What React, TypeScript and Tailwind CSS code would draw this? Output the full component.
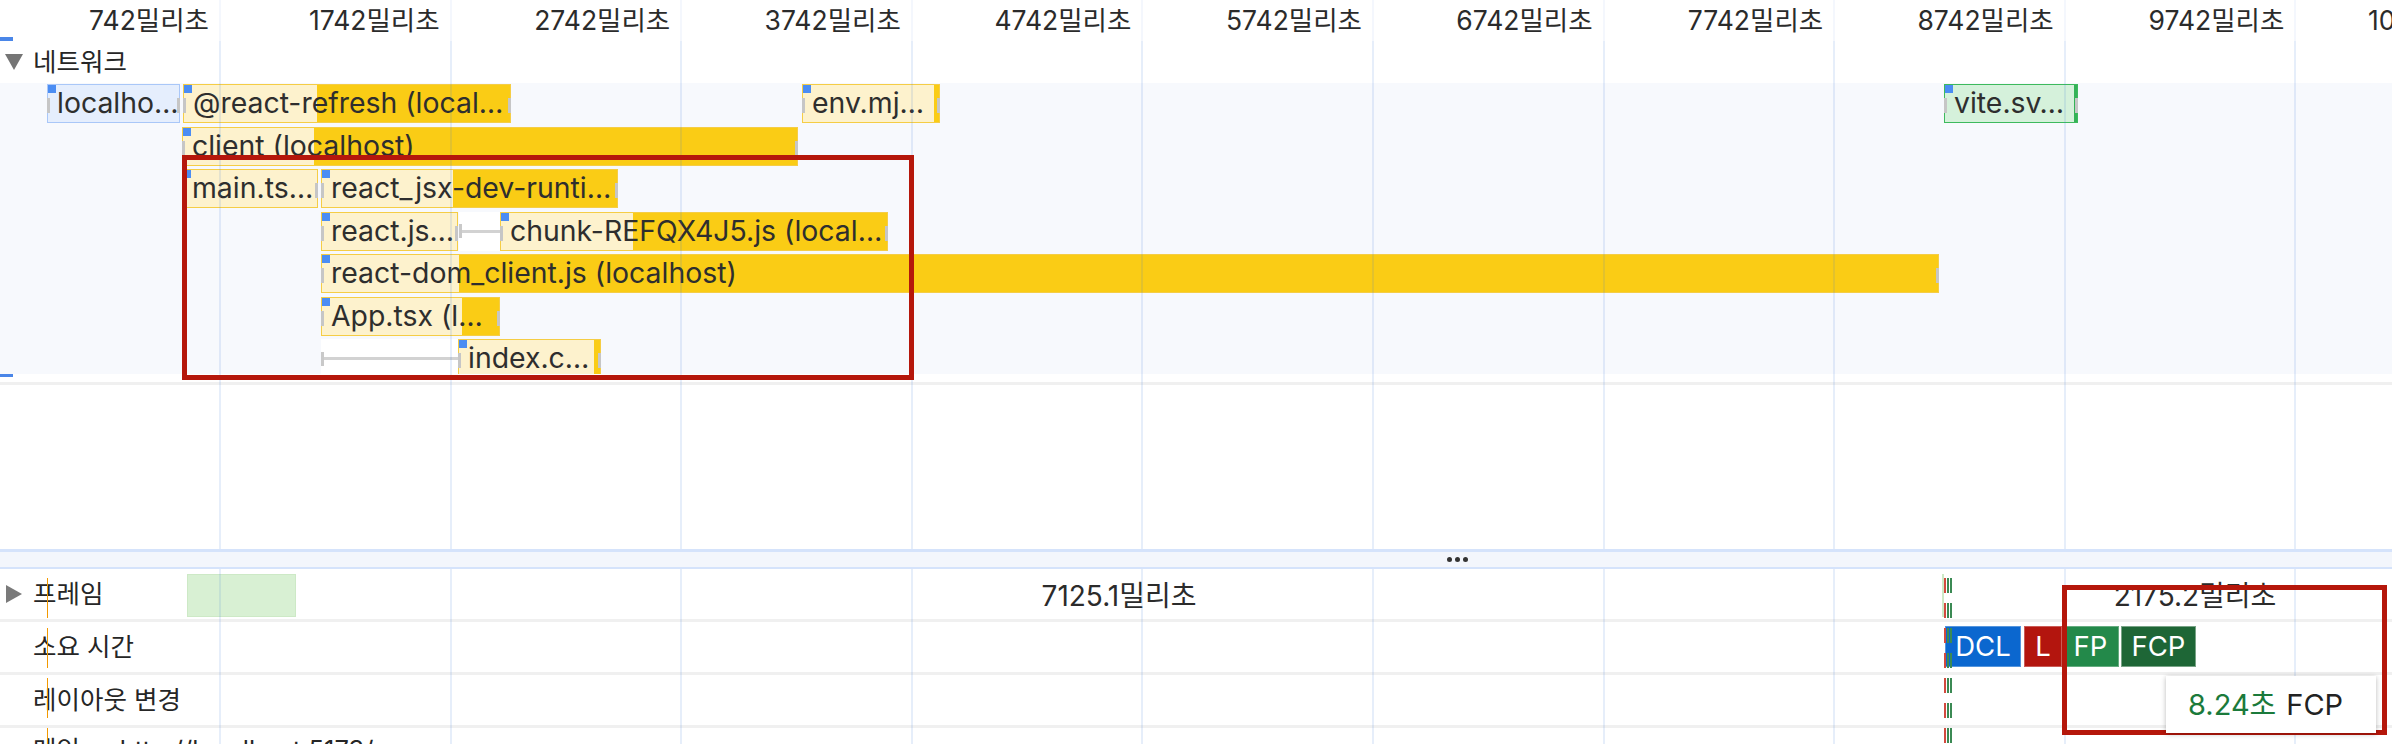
import clsx from "clsx";

type Kind = "doc" | "script" | "img";

interface NetRequest {
  label: string;
  start: number;
  split: number;
  end: number;
  kind: Kind;
  queuedFrom?: number;
}

const KIND_STYLES: Record<Kind, { box: string; light: string; solid: string }> = {
  doc: { box: "border-[#a9c7f8]", light: "bg-[#e5eefd]", solid: "bg-[#4b8af3]" },
  script: { box: "border-[#f5cd45]", light: "bg-[#fdf2cd]", solid: "bg-[#facc15]" },
  img: { box: "border-[#3dba5d]", light: "bg-[#d5f1db]", solid: "bg-[#34b257]" },
};

const NETWORK_ROWS: NetRequest[][] = [
  [
    { label: "localho…", start: 47, split: 180, end: 180, kind: "doc" },
    { label: "@react-refresh (local…", start: 183, split: 317, end: 511, kind: "script" },
    { label: "env.mj…", start: 802, split: 934, end: 940, kind: "script" },
    { label: "vite.sv…", start: 1944, split: 2074, end: 2078, kind: "img" },
  ],
  [{ label: "client (localhost)", start: 182, split: 314, end: 798, kind: "script" }],
  [
    { label: "main.ts…", start: 182, split: 318, end: 318, kind: "script" },
    { label: "react_jsx-dev-runti…", start: 321, split: 453, end: 618, kind: "script" },
  ],
  [
    { label: "react.js…", start: 321, split: 458, end: 458, kind: "script" },
    { label: "chunk-REFQX4J5.js (local…", start: 500, split: 633, end: 888, kind: "script", queuedFrom: 459 },
  ],
  [{ label: "react-dom_client.js (localhost)", start: 321, split: 459, end: 1939, kind: "script" }],
  [{ label: "App.tsx (l…", start: 321, split: 462, end: 500, kind: "script" }],
  [{ label: "index.c…", start: 458, split: 594, end: 601, kind: "script", queuedFrom: 321 }],
];

const TICKS = [742, 1742, 2742, 3742, 4742, 5742, 6742, 7742, 8742, 9742, 10742];
const GRID_X = TICKS.slice(0, 10).map((_, i) => 220 + 230.6 * i);

const FRAMES = [
  { start: 187, end: 296, label: "", filled: true },
  { start: 296, end: 1942, label: "7125.1밀리초", filled: false },
  { start: 1942, end: 1944, label: "", filled: true },
  { start: 1952, end: 2438, label: "2175.2밀리초", filled: false },
];

const RequestBar = ({ req }: { req: NetRequest }) => {
  const c = KIND_STYLES[req.kind];
  return (
    <>
      {req.queuedFrom !== undefined && (
        <div
          className="absolute inset-y-0 flex items-center bg-white"
          style={{ left: req.queuedFrom, width: req.start - req.queuedFrom }}
        >
          <div className="h-[14px] w-[3px] bg-[#c9c9c9]" />
          <div className="h-[3px] flex-1 bg-[#d2d2d2]" />
        </div>
      )}
      <div
        className={clsx("absolute inset-y-0 flex border", c.box)}
        style={{ left: req.start, width: req.end - req.start }}
      >
        <div className={c.light} style={{ width: Math.max(req.split - req.start - 1, 0) }} />
        <div className={clsx("flex-1", c.solid)} />
        <span className="absolute left-0 top-0 h-[8px] w-[8px] bg-[#4b8df3]" />
        <span className="absolute left-[-1px] top-[13px] h-[15px] w-[3px] bg-[#c6c6c6]" />
        <span className="absolute right-[-1px] top-[13px] h-[15px] w-[3px] bg-[#c6c6c6]" />
        <span className="absolute inset-y-0 left-[9px] flex items-center whitespace-nowrap text-[28.4px] text-[#2e2e2e]">
          {req.label}
        </span>
      </div>
    </>
  );
};

const TrackLabel = ({ text, expandable }: { text: string; expandable?: boolean }) => (
  <div className="flex h-full items-center pl-[6px] text-[25.5px] text-[#262626]">
    <div className="w-[27px]">
      {expandable && (
        <svg width="16" height="18" viewBox="0 0 16 18">
          <path d="M0 0L16 9L0 18z" fill="#7a7a7a" />
        </svg>
      )}
    </div>
    <span className="whitespace-nowrap">{text}</span>
  </div>
);

const RowDivider = () => <div className="h-[3px] bg-[#f0f0f0]" />;

export default function App() {
  return (
    <div className="relative h-[744px] w-[2392px] overflow-hidden bg-white font-[family-name:Inter,'Noto_Sans_CJK_KR',sans-serif] text-[#303030]">
      {/* time ruler */}
      <div className="relative flex h-[41px] items-center whitespace-nowrap text-[26.5px] text-[#2b2b2b]">
        {TICKS.map((t, i) => (
          <div
            key={t}
            className={clsx(i === 0 ? "w-[220px]" : "w-[230.6px]", "shrink-0 pr-[11px] text-right")}
          >
            {t}밀리초
          </div>
        ))}
        <span className="absolute bottom-0 left-0 h-[4px] w-[13px] bg-[#4a86e8]" />
      </div>

      {/* network track header */}
      <div className="flex h-[42px] items-center gap-[10px] pl-[5px] text-[25.5px] text-[#262626]">
        <svg width="18" height="16" viewBox="0 0 18 16">
          <path d="M0 0H18L9 16z" fill="#757575" />
        </svg>
        <span>네트워크</span>
      </div>

      {/* network requests */}
      <div className="flex h-[291px] flex-col gap-[3.5px] overflow-hidden bg-[#f7f9fd] pt-[1px]">
        {NETWORK_ROWS.map((row, i) => (
          <div key={i} className="relative h-[39px] shrink-0">
            {row.map((r) => (
              <RequestBar key={r.label} req={r} />
            ))}
          </div>
        ))}
      </div>

      {/* empty space below network */}
      <div className="flex h-[175px] flex-col">
        <div className="h-[3px] w-[13px] bg-[#4a86e8]" />
        <div className="mt-[5px] h-[3px] bg-[#f0f0f0]" />
      </div>

      {/* resize divider */}
      <div className="flex h-[20px] items-center border-t-[3px] border-b-2 border-[#d5e3fb] bg-[#f3f6fc] pl-[1447px]">
        <div className="flex gap-[3px]">
          <span className="h-[5px] w-[5px] rounded-full bg-[#333]" />
          <span className="h-[5px] w-[5px] rounded-full bg-[#333]" />
          <span className="h-[5px] w-[5px] rounded-full bg-[#333]" />
        </div>
      </div>

      {/* frames */}
      <div className="relative h-[50px]">
        <TrackLabel text="프레임" expandable />
        {FRAMES.map((f) => (
          <div
            key={f.start}
            className={clsx(
              "absolute top-[5px] flex h-[43px] items-center justify-center whitespace-nowrap text-[28px] text-[#2b2b2b]",
              f.filled && "border border-[#cde9c6] bg-[#d8f0d3]",
            )}
            style={{ left: f.start, width: f.end - f.start }}
          >
            {f.label}
          </div>
        ))}
      </div>
      <RowDivider />

      {/* timings */}
      <div className="relative h-[50px]">
        <TrackLabel text="소요 시간" />
        <div className="absolute left-[1945px] top-[4px] flex h-[41px] text-[27.5px] text-white">
          <div className="flex w-[76px] items-center justify-center border border-white/30 bg-[#0b67cf]">DCL</div>
          <div className="ml-[3px] flex w-[38px] items-center justify-center border border-white/30 bg-[#b3150e]">L</div>
          <div className="flex w-[57px] items-center justify-center border border-white/30 bg-[#23894a]">FP</div>
          <div className="ml-[2px] flex w-[75px] items-center justify-center border border-white/40 bg-[#1e6636]">FCP</div>
        </div>
      </div>
      <RowDivider />

      {/* layout shifts */}
      <div className="h-[50px]">
        <TrackLabel text="레이아웃 변경" />
      </div>
      <RowDivider />

      {/* main thread (cut off) */}
      <div className="h-[44px]">
        <TrackLabel text="메인 — http://localhost:5173/" />
      </div>

      {/* grid lines */}
      <div className="pointer-events-none absolute inset-0">
        {GRID_X.map((x) => (
          <div key={x} className="absolute inset-y-0 flex w-[2px] flex-col" style={{ left: x - 1 }}>
            <div className="h-[41px] bg-[#3c78dc]/[0.06]" />
            <div className="h-[508px] bg-[#3c78dc]/[0.13]" />
            <div className="h-[20px]" />
            <div className="flex-1 bg-[#3c78dc]/[0.13]" />
          </div>
        ))}
      </div>

      {/* orange cursor line across tracks */}
      <div className="pointer-events-none absolute left-[47px] top-[578px] h-[166px] w-px bg-[repeating-linear-gradient(to_bottom,#f29900_0,#f29900_40px,transparent_40px,transparent_50px)]" />

      {/* navigation markers */}
      <div className="pointer-events-none absolute left-[1944px] top-[578px] flex h-[166px] gap-[1px]">
        <div className="w-[2px] bg-[repeating-linear-gradient(to_bottom,#d24a3f_0,#d24a3f_15px,transparent_15px,transparent_25px)]" />
        <div className="w-[2px] bg-[repeating-linear-gradient(to_bottom,#3b8a54_0,#3b8a54_15px,transparent_15px,transparent_25px)]" />
        <div className="w-[2px] bg-[repeating-linear-gradient(to_bottom,#3b8a54_0,#3b8a54_15px,transparent_15px,transparent_25px)]" />
      </div>

      {/* annotation boxes */}
      <div className="pointer-events-none absolute left-[182px] top-[155px] h-[225px] w-[732px] border-[5px] border-[#b5170b]" />
      <div className="pointer-events-none absolute left-[2062px] top-[585px] h-[150px] w-[325px] border-[5px] border-[#b5170b]" />

      {/* hover tooltip */}
      <div className="absolute left-[2166px] top-[676px] flex h-[57px] w-[210px] items-center whitespace-nowrap bg-white pl-[22px] text-[29px] shadow-[0_1px_5px_rgba(0,0,0,0.28)]">
        <span className="text-[#1b7a3b]">8.24초</span>
        <span className="ml-[10px] text-[#222]">FCP</span>
      </div>
    </div>
  );
}
